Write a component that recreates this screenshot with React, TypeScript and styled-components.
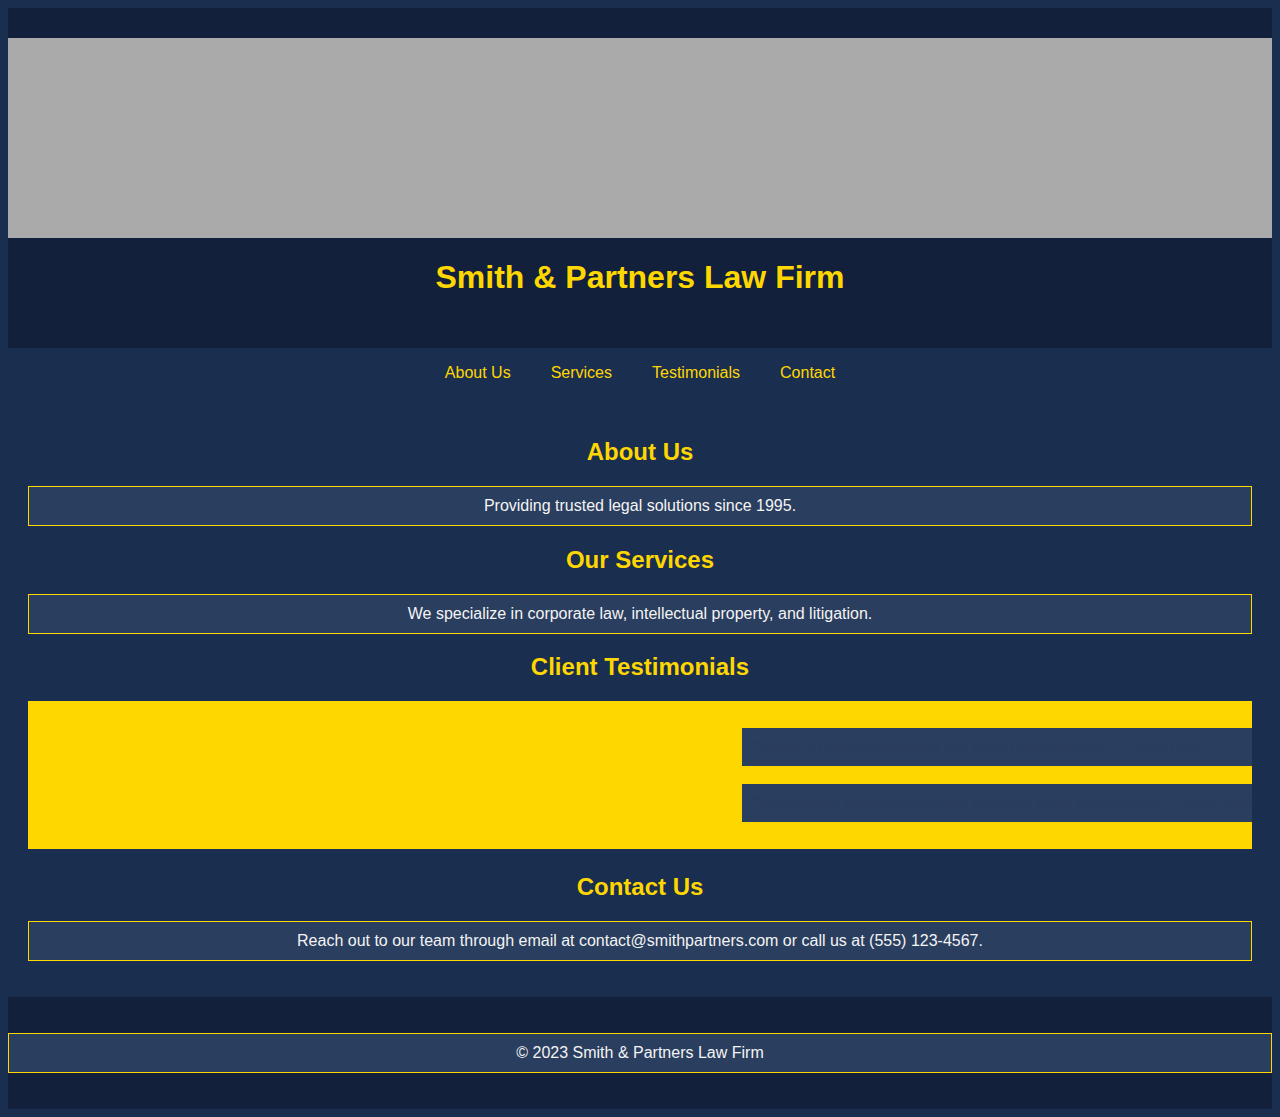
import React from "react";
import styled, { createGlobalStyle } from "styled-components";

const gold = "#ffd700";
const navy = "#1a2e4f";
const midnight = "#12203b";
const slate = "#2a3e5f";

const GlobalStyle = createGlobalStyle`
  body {
    margin: 8px;
    background: ${navy};
    color: #f4f4f4;
    font-family: Arial, "Liberation Sans", sans-serif;
    font-size: 16px;
    text-align: center;
  }
`;

const Header = styled.header`
  padding: 30px 0;
  background: ${midnight};
`;

const Banner = styled.div`
  height: 200px;
  background: #aaaaaa;
`;

const Title = styled.h1`
  color: ${gold};
  font-size: 32px;
  line-height: 37px;
`;

const Nav = styled.nav`
  display: flex;
  flex-wrap: wrap;
  justify-content: center;
  gap: 0 40px;
  padding: 16px 0;
  line-height: 18px;
`;

const NavLink = styled.a`
  color: ${gold};
  text-decoration: none;
`;

const Main = styled.main`
  display: flow-root;
  padding: 20px;
`;

const SectionTitle = styled.h2`
  color: ${gold};
  font-size: 24px;
  line-height: 28px;
`;

const Card = styled.p`
  margin: 16px 0;
  padding: 10px;
  border: 1px solid ${gold};
  background: ${slate};
  line-height: 18px;
`;

const Ticker = styled.div`
  display: inline-block;
  box-sizing: border-box;
  width: 100%;
  padding: 10px 0;
  overflow: hidden;
  background: ${gold};
  color: #293d5e;
  text-align: left;
  white-space: nowrap;
`;

const TickerTrack = styled.div`
  display: flow-root;
  width: 100%;
  margin-left: 58.25%;
`;

const Footer = styled.footer`
  display: flow-root;
  padding: 20px 0;
  background: ${midnight};
`;

const links = [
  { href: "#about", label: "About Us" },
  { href: "#services", label: "Services" },
  { href: "#testimonials", label: "Testimonials" },
  { href: "#contact", label: "Contact" },
];

const testimonials = [
  '"Smith & Partners handled our case professionally." - Jane Doe',
  '"Exceptional guidance through complex legal landscapes." - John Smith',
];

export default function App() {
  return (
    <>
      <GlobalStyle />
      <Header>
        <Banner />
        <Title>Smith &amp; Partners Law Firm</Title>
      </Header>
      <Nav>
        {links.map((link) => (
          <NavLink key={link.href} href={link.href}>
            {link.label}
          </NavLink>
        ))}
      </Nav>
      <Main>
        <section id="about">
          <SectionTitle>About Us</SectionTitle>
          <Card>Providing trusted legal solutions since 1995.</Card>
        </section>
        <section id="services">
          <SectionTitle>Our Services</SectionTitle>
          <Card>We specialize in corporate law, intellectual property, and litigation.</Card>
        </section>
        <section id="testimonials">
          <SectionTitle>Client Testimonials</SectionTitle>
          <Ticker>
            <TickerTrack>
              {testimonials.map((quote) => (
                <Card key={quote}>{quote}</Card>
              ))}
            </TickerTrack>
          </Ticker>
        </section>
        <section id="contact">
          <SectionTitle>Contact Us</SectionTitle>
          <Card>
            Reach out to our team through email at contact@smithpartners.com or call us at (555)
            123-4567.
          </Card>
        </section>
      </Main>
      <Footer>
        <Card>© 2023 Smith &amp; Partners Law Firm</Card>
      </Footer>
    </>
  );
}
